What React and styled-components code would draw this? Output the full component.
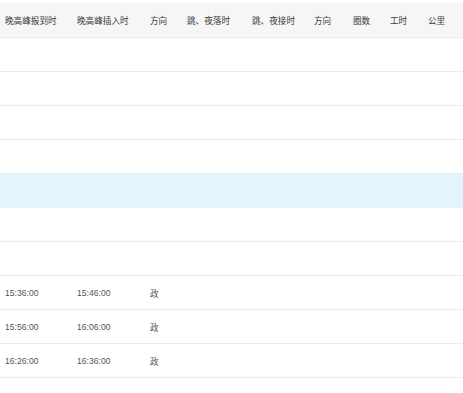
import * as React from "react";
import styled, { createGlobalStyle } from "styled-components";

const GlobalStyle = createGlobalStyle`
  html, body {
    margin: 0;
    padding: 0;
    background: #ffffff;
  }
  body {
    font-family: "Liberation Sans", "Noto Sans CJK SC", sans-serif;
  }
`;

const COLUMNS = "72px 73px 37px 65px 62px 39px 37px 38px 1fr";

const Table = styled.div`
  width: 463px;
  height: 393px;
  overflow: hidden;
  padding-top: 3px;
  box-sizing: border-box;
  font-size: 8.6px;
`;

const HeaderRow = styled.div`
  display: grid;
  grid-template-columns: ${COLUMNS};
  align-items: center;
  height: 34px;
  padding-left: 5px;
  background: #f6f6f6;
  border-bottom: 1px solid #e9e9e9;
  color: #3c3c3c;
`;

const Row = styled.div`
  display: grid;
  grid-template-columns: ${COLUMNS};
  align-items: center;
  height: 33px;
  padding-left: 5px;
  border-bottom: 1px solid #ececec;
  background: ${(props) => (props.$active ? "#e2f4fd" : "#ffffff")};
  color: #555555;
`;

const Cell = styled.span`
  white-space: nowrap;
`;

const headers = [
  "晚高峰报到时",
  "晚高峰插入时",
  "方向",
  "跳、夜落时",
  "跳、夜接时",
  "方向",
  "圈数",
  "工时",
  "公里",
];

const rows = [
  [],
  [],
  [],
  [],
  [],
  [],
  [],
  ["15:36:00", "15:46:00", "政"],
  ["15:56:00", "16:06:00", "政"],
  ["16:26:00", "16:36:00", "政"],
  [],
];

const App = () => {
  return (
    <>
      <GlobalStyle />
      <Table>
        <HeaderRow>
          {headers.map((h, i) => (
            <Cell key={i}>{h}</Cell>
          ))}
        </HeaderRow>
        {rows.map((row, i) => (
          <Row key={i} $active={i === 4}>
            {row.map((value, j) => (
              <Cell key={j}>{value}</Cell>
            ))}
          </Row>
        ))}
      </Table>
    </>
  );
};

export default App;
